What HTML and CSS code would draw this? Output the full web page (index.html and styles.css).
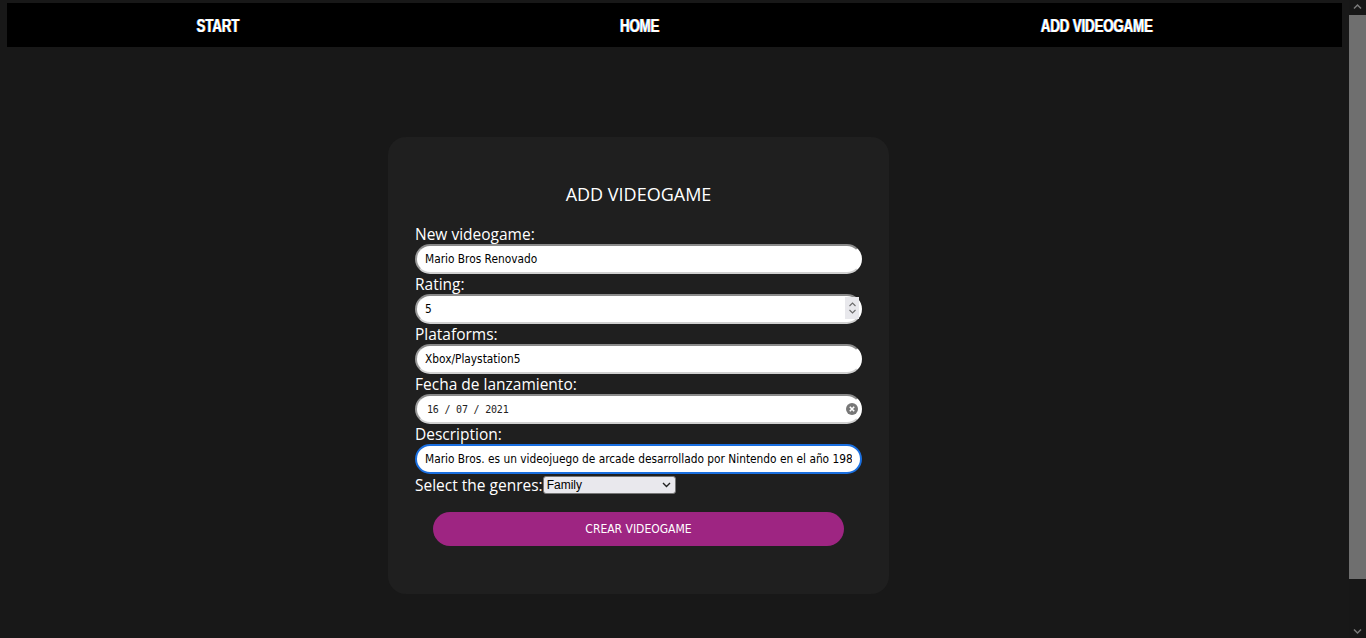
FILE: index.html
```html
<!DOCTYPE html>
<html lang="es">
<head>
<meta charset="utf-8">
<title>Add videogame</title>
<link rel="stylesheet" href="styles.css">
</head>
<body>
<nav class="nav">
  <a class="nav-link" href="#">START</a>
  <a class="nav-link" href="#">HOME</a>
  <a class="nav-link" href="#">ADD VIDEOGAME</a>
</nav>
<main class="page">
  <form class="card">
    <h3 class="card-title">ADD VIDEOGAME</h3>
    <label class="field-label">New videogame:</label>
    <div class="field"><input class="field-input" type="text" value="Mario Bros Renovado"></div>
    <label class="field-label">Rating:</label>
    <div class="field">
      <input class="field-input" type="text" value="5">
      <span class="spinner"><svg width="9" height="14" viewBox="0 0 9 14"><path d="M1.5 5 L4.5 2 L7.5 5 M1.5 9 L4.5 12 L7.5 9" fill="none" stroke="#6b6b6b" stroke-width="1.1"/></svg></span>
    </div>
    <label class="field-label">Plataforms:</label>
    <div class="field"><input class="field-input" type="text" value="Xbox/Playstation5"></div>
    <label class="field-label">Fecha de lanzamiento:</label>
    <div class="field">
      <input class="field-input date-input" type="text" value="16 / 07 / 2021">
      <span class="clear-btn"><svg width="12" height="12" viewBox="0 0 12 12"><circle cx="6" cy="6" r="6" fill="#777"/><path d="M3.8 3.8 L8.2 8.2 M8.2 3.8 L3.8 8.2" stroke="#fff" stroke-width="1.6"/></svg></span>
    </div>
    <label class="field-label">Description:</label>
    <div class="field"><input class="field-input focused" type="text" value="Mario Bros. es un videojuego de arcade desarrollado por Nintendo en el año 1983"></div>
    <div class="genres-row">
      <span class="field-label inline">Select the genres:</span>
      <div class="select-box">
        <span class="select-value">Family</span>
        <svg width="9" height="6" viewBox="0 0 9 6"><path d="M1 1 L4.5 4.5 L8 1" fill="none" stroke="#222" stroke-width="1.4"/></svg>
      </div>
    </div>
    <button class="submit-btn" type="button">CREAR VIDEOGAME</button>
  </form>
</main>
<div class="scrollbar" aria-hidden="true">
  <svg class="scroll-arrow" width="17" height="14" viewBox="0 0 17 14"><path d="M5 8.5 L8.5 5 L12 8.5" fill="none" stroke="#7a7a7a" stroke-width="1.5"/></svg>
  <div class="scroll-thumb"></div>
  <div class="scroll-rest"></div>
  <svg class="scroll-arrow" width="17" height="14" viewBox="0 0 17 14"><path d="M5 5.5 L8.5 9 L12 5.5" fill="none" stroke="#7a7a7a" stroke-width="1.5"/></svg>
</div>
</body>
</html>
```
FILE: styles.css
```css
html {
  background: #181818;
}
body {
  margin: 3px 24px 3px 7px;
  background: #181818;
  font-family: "Open Sans", "Noto Sans", sans-serif;
}
.nav {
  box-sizing: border-box;
  display: grid;
  grid-template-columns: 422px 422px 1fr;
  justify-items: center;
  align-items: center;
  height: 44px;
  padding-top: 3px;
  background: #000;
}
.nav-link {
  display: inline-block;
  color: #fff;
  text-decoration: none;
  font-family: "Liberation Sans", "DejaVu Sans", sans-serif;
  font-weight: bold;
  font-size: 18px;
  letter-spacing: -0.2px;
  transform: scaleX(0.74);
  text-shadow: -0.7px 0 #3aa0ff, 0.7px 0 #ff9a30;
}
.page {
  display: flex;
  padding: 90px 0 86px 381px;
}
.card {
  width: 447px;
  padding: 45px 27px 48px;
  background: #1f1f1f;
  border-radius: 18px;
  display: flex;
  flex-direction: column;
}
.card-title {
  margin: 0 0 18px;
  text-align: center;
  color: #fff;
  font-weight: normal;
  font-size: 18px;
  line-height: 24px;
}
.field-label {
  color: #fff;
  font-size: 15.5px;
  line-height: 20px;
  height: 20px;
}
.field-label.inline {
  height: auto;
}
.field {
  position: relative;
  height: 30px;
}
.field-input {
  box-sizing: border-box;
  width: 100%;
  height: 30px;
  margin: 0;
  padding: 0 8px;
  border: 2px solid #fff;
  border-top-color: #8a8a8a;
  border-left-color: #9a9a9a;
  border-bottom-color: #d0d0d0;
  border-radius: 15px;
  background: #fff;
  color: #000;
  font-family: "DejaVu Sans Condensed", "Liberation Sans", sans-serif;
  font-size: 11.8px;
  outline: none;
}
.field-input.focused {
  border: 2px solid #1a6fe0;
}
.date-input {
  padding-left: 10px;
  font-family: "DejaVu Sans Mono", monospace;
  font-size: 10px;
  letter-spacing: -0.2px;
  color: #222;
}
.spinner {
  position: absolute;
  right: 3px;
  top: 3px;
  width: 14px;
  height: 22px;
  background: #e8e8ec;
  display: flex;
  align-items: center;
  justify-content: center;
}
.clear-btn {
  position: absolute;
  right: 4px;
  top: 9px;
  display: flex;
}
.genres-row {
  display: flex;
  align-items: center;
  margin-top: 1px;
  height: 20px;
}
.select-box {
  box-sizing: border-box;
  width: 133px;
  height: 18px;
  border: 1px solid #767676;
  border-radius: 3px;
  background: #e9e8ed;
  display: flex;
  align-items: center;
  justify-content: space-between;
  padding: 0 4px 0 3px;
  font-family: "Liberation Sans", sans-serif;
  font-size: 12px;
  color: #000;
}
.submit-btn {
  margin: 17px 18px 0;
  height: 34px;
  border: none;
  border-radius: 17px;
  background: #9e2582;
  color: #fff;
  font-family: "DejaVu Sans Condensed", "Liberation Sans", sans-serif;
  font-size: 12px;
}
.scrollbar {
  position: fixed;
  top: 0;
  right: 0;
  width: 17px;
  height: 100vh;
  background: #171717;
  display: flex;
  flex-direction: column;
}
.scroll-arrow {
  flex: none;
}
.scroll-thumb {
  flex: none;
  height: 564px;
  margin-top: 1px;
  background: #6f6f6f;
}
.scroll-rest {
  flex: 1;
}
```
